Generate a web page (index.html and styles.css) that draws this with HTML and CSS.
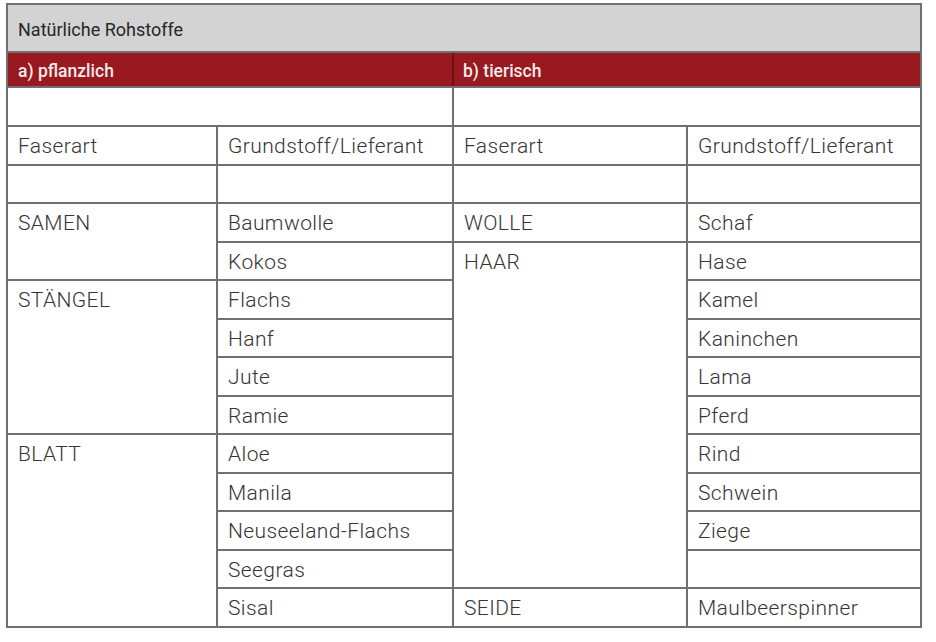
FILE: index.html
```html
<!DOCTYPE html>
<html lang="de">
<head>
<meta charset="utf-8">
<title>Natürliche Rohstoffe</title>
<link rel="stylesheet" href="styles.css">
</head>
<body>
<div class="sheet">
  <div class="title">Natürliche Rohstoffe</div>
  <div class="band">
    <div class="band-cell">a) pflanzlich</div>
    <div class="band-cell">b) tierisch</div>
  </div>
  <div class="c half-l"></div>
  <div class="c half-r"></div>

  <div class="c">Faserart</div>
  <div class="c">Grundstoff/Lieferant</div>
  <div class="c">Faserart</div>
  <div class="c">Grundstoff/Lieferant</div>

  <div class="c"></div>
  <div class="c"></div>
  <div class="c"></div>
  <div class="c"></div>

  <div class="c r2">SAMEN</div>
  <div class="c">Baumwolle</div>
  <div class="c">WOLLE</div>
  <div class="c">Schaf</div>

  <div class="c">Kokos</div>
  <div class="c r9">HAAR</div>
  <div class="c">Hase</div>

  <div class="c r4">STÄNGEL</div>
  <div class="c">Flachs</div>
  <div class="c">Kamel</div>

  <div class="c">Hanf</div>
  <div class="c">Kaninchen</div>

  <div class="c">Jute</div>
  <div class="c">Lama</div>

  <div class="c">Ramie</div>
  <div class="c">Pferd</div>

  <div class="c r5">BLATT</div>
  <div class="c">Aloe</div>
  <div class="c">Rind</div>

  <div class="c">Manila</div>
  <div class="c">Schwein</div>

  <div class="c">Neuseeland-Flachs</div>
  <div class="c">Ziege</div>

  <div class="c">Seegras</div>
  <div class="c"></div>

  <div class="c">Sisal</div>
  <div class="c">SEIDE</div>
  <div class="c">Maulbeerspinner</div>
</div>
</body>
</html>
```
FILE: styles.css
```css
html, body {
  margin: 0;
  padding: 0;
  background: #ffffff;
}

body {
  padding: 3px 0 0 6px;
  font-family: Roboto, "Liberation Sans", Arial, sans-serif;
}

.sheet {
  width: 916px;
  box-sizing: border-box;
  padding: 2px;
  background: #707070;
  display: grid;
  grid-template-columns: 208px 234px 232px 232px;
  grid-template-rows: 46px 33px 37px repeat(13, 36.5px);
  gap: 2px;
}

.title {
  grid-column: 1 / -1;
  background: #d3d3d3;
  color: #262626;
  font-size: 18px;
  line-height: 22px;
  padding: 14px 0 0 10px;
  font-weight: 400;
}

.band {
  grid-column: 1 / -1;
  display: grid;
  grid-template-columns: 444px 466px;
  gap: 2px;
  background: #6a1216;
}

.band-cell {
  background: #98191f;
  color: #f6eaea;
  font-size: 17.5px;
  line-height: 20px;
  font-weight: 500;
  padding: 8px 0 0 10px;
}

.band-cell + .band-cell {
  padding-left: 9px;
}

.c {
  background: #ffffff;
  color: #353535;
  font-size: 21px;
  line-height: 24px;
  font-weight: 300;
  letter-spacing: 0.4px;
  padding: 7px 0 0 10px;
  white-space: nowrap;
}

.half-l { grid-column: 1 / 3; }
.half-r { grid-column: 3 / 5; }
.r2 { grid-row: span 2; }
.r4 { grid-row: span 4; }
.r5 { grid-row: span 5; }
.r9 { grid-row: span 9; }
```
